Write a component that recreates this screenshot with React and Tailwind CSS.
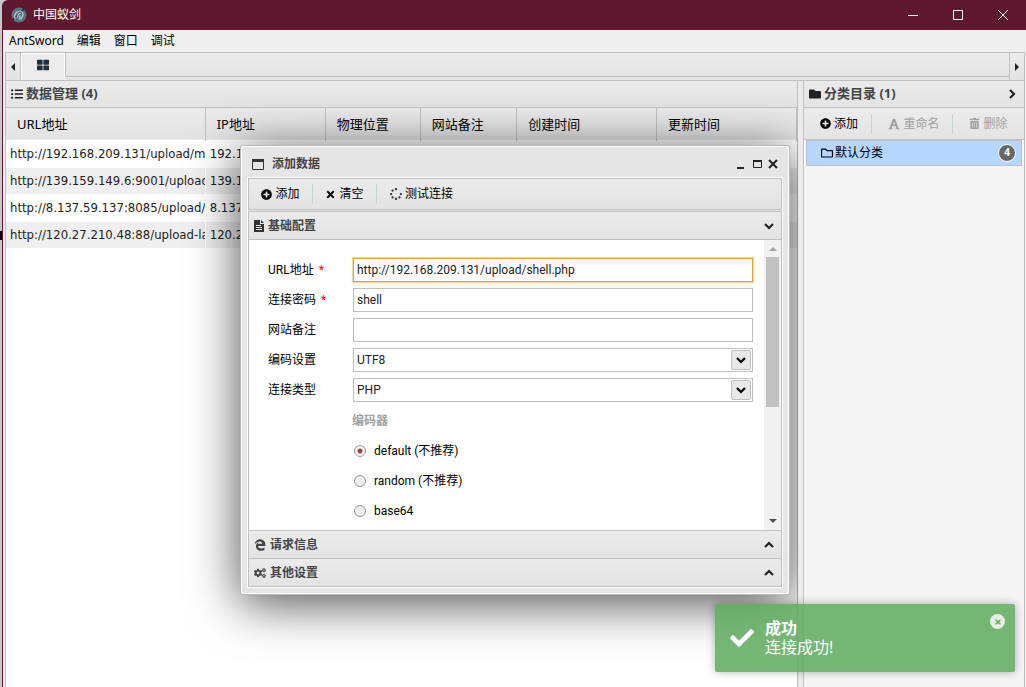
import React from "react";
import { FaPlusCircle, FaTimes, FaSpinner, FaListUl, FaFolder, FaFont, FaTrashAlt, FaRegFolder, FaEdgeLegacy, FaCogs, FaCheck, FaThLarge } from "react-icons/fa";

const barBg = "bg-linear-to-b from-[#ebebeb] to-[#e3e3e3]";
const sites = [
  ["http://192.168.209.131/upload/myshell.php", "192.168.209.131"],
  ["http://139.159.149.6:9001/upload/shell.php", "139.159.149.6"],
  ["http://8.137.59.137:8085/upload/shell.php", "8.137.59.137"],
  ["http://120.27.210.48:88/upload-labs/shell.php", "120.27.210.48"],
];
const columns = ["URL地址", "IP地址", "物理位置", "网站备注", "创建时间", "更新时间"];

function Logo() {
  return (
    <svg className="size-4" viewBox="0 0 16 16" aria-hidden="true">
      <circle cx="8" cy="8" r="7.5" fill="#587480" />
      <path d="M1.500 13 13.500 1.500" stroke="#22343c" strokeWidth="1.600" />
      <path d="M4.500 12C2.500 9 4 5.500 7.500 4.500M8.500 4c3.500 0 4.500 3.500 2.500 6.500-.8 1-2 1.700-3.200 1.800M6.200 10.500l1-3 2.300-1.800M9.300 8.500l-.6 2.300" stroke="#c2d5dc" strokeWidth="1.200" fill="none" />
    </svg>
  );
}

function Chevron({ d }) {
  return (
    <svg className="size-2.5" viewBox="0 0 10 10" aria-hidden="true">
      <path d={d} fill="none" stroke="currentColor" strokeWidth="2.200" />
    </svg>
  );
}
const DOWN = "M1 3l4 4 4-4";
const UP = "M1 7l4-4 4 4";
const RIGHT = "M3 1l4 4-4 4";

function FileText() {
  return (
    <svg className="h-3 w-2.5" viewBox="0 0 10 12" aria-hidden="true">
      <path fill="#333" fillRule="evenodd" d="M0 .5Q0 0 .5 0H6v4h4v7.500q0 .5-.5.500h-9Q0 12 0 11.500zM7 0l3 3H7zM2 5h5v1H2zM2 7h6v1H2zM2 9h6v1H2z" />
    </svg>
  );
}

function TitleBar() {
  return (
    <header className="flex h-[30px] items-center rounded-tl-md bg-[#5f182f] pl-[9px] text-white">
      <Logo />
      <h1 className="ml-1.5 flex-1 text-xs">中国蚁剑</h1>
      <button aria-label="最小化" className="flex h-full w-[46px] items-center justify-center"><svg className="size-3" viewBox="0 0 12 12"><path d="M1 6.500h10" stroke="#fff" /></svg></button>
      <button aria-label="最大化" className="flex h-full w-11 items-center justify-center"><svg className="size-3" viewBox="0 0 12 12"><path d="M1.500 1.500h9v9h-9z" fill="none" stroke="#fff" /></svg></button>
      <button aria-label="关闭" className="flex h-full w-[46px] items-center justify-center"><svg className="size-3" viewBox="0 0 12 12"><path d="m1 1 10 10M11 1 1 11" stroke="#fff" /></svg></button>
    </header>
  );
}

function TabBar() {
  return (
    <div className={`flex h-[29px] border border-[#c0c0c0] ${barBg}`}>
      <button aria-label="向左" className="flex w-[15px] items-center justify-center border-r border-[#c0c0c0]"><svg className="h-2 w-1" viewBox="0 0 4 8"><path d="M4 0v8L0 4z" fill="#222" /></svg></button>
      <button aria-label="主页" className="flex w-11 items-center justify-center border border-b-0 border-white bg-[#ebebeb] pb-1"><FaThLarge className="size-3 text-[#1d2f3d]" /></button>
      <div className="mb-[3px] flex-1 border-b border-l border-[#c0c0c0]" />
      <button aria-label="向右" className="flex w-[15px] items-center justify-center border-l border-[#c0c0c0]"><svg className="h-2 w-1" viewBox="0 0 4 8"><path d="M0 0v8l4-4z" fill="#222" /></svg></button>
    </div>
  );
}

function SiteTable() {
  return (
    <section className="flex min-w-0 flex-1 flex-col border-x border-[#c0c0c0] bg-white">
      <h2 className={`flex h-[27px] items-center gap-[3px] border-b border-[#c0c0c0] px-[5px] text-[13px] font-bold text-[#444] ${barBg}`}><FaListUl className="size-3 text-[#222]" />数据管理 (4)</h2>
      <table className="w-full table-fixed border-collapse text-left">
        <colgroup><col className="w-[25.200%]" /><col className="w-[15.200%]" /><col className="w-[12%]" /><col className="w-[12.200%]" /><col className="w-[17.700%]" /><col className="w-[17.700%]" /></colgroup>
        <thead>
          <tr className={`h-8 border-b border-[#c0c0c0] ${barBg}`}>
            {columns.map((c) => <th key={c} className="border-r border-[#c0c0c0] px-[11px] text-[13px] leading-5 font-normal">{c}</th>)}
          </tr>
        </thead>
        <tbody className="font-['DejaVu_Sans_Condensed','Noto_Sans',sans-serif]">
          {sites.map(([url, ip]) => (
            <tr key={url} className="h-[27px] text-[13px] leading-5 text-[#222]">
              <td className="overflow-hidden border-y border-r border-white bg-clip-padding pl-1 whitespace-nowrap in-[tr:nth-child(even)]:bg-[#efefef]">{url}</td>
              <td className="overflow-hidden border-y border-white bg-clip-padding pl-1 whitespace-nowrap in-[tr:nth-child(even)]:bg-[#efefef]">{ip}</td>
              <td colSpan="4" className="border-y border-white bg-clip-padding in-[tr:nth-child(even)]:bg-[#efefef]" />
            </tr>
          ))}
        </tbody>
      </table>
    </section>
  );
}

function Categories() {
  return (
    <aside className="relative z-20 flex w-[222px] flex-col border-x border-[#c0c0c0] bg-[#f4f4f4]">
      <h2 className={`flex h-[27px] items-center gap-[3px] border-b border-[#c0c0c0] px-[5px] text-[13px] font-bold text-[#444] ${barBg}`}>
        <FaFolder className="size-3 text-[#222]" /><span className="flex-1">分类目录 (1)</span>
        <button aria-label="收起" className="mr-0.5 text-[#222]"><Chevron d={RIGHT} /></button>
      </h2>
      <div className={`flex h-8 items-center border-b border-[#c0c0c0] text-xs ${barBg}`}>
        <button className="flex h-5 w-[68px] items-center justify-center gap-[3px] border-r border-[#bcd6dc] pl-[3px]"><FaPlusCircle className="size-[11px]" />添加</button>
        <button disabled className="flex h-5 w-[81px] items-center justify-center gap-[3px] border-r border-[#bcd6dc] pl-1 text-[#a0a0a0]"><FaFont className="size-3" />重命名</button>
        <button disabled className="flex h-5 flex-1 items-center justify-center gap-[3px] text-[#a0a0a0]"><FaTrashAlt className="size-[11px]" />删除</button>
      </div>
      <div className="bg-[#f8f8f8] px-0.5">
        <button className="flex h-[26px] w-full items-center border border-[#bfbfbf] bg-[#b5d6ff] pr-[5px] pl-3.5 text-xs">
          <FaRegFolder className="mr-0.5 size-3" /><span className="flex-1 text-left">默认分类</span>
          <span className="flex size-[18px] items-center justify-center rounded-full border border-white bg-[#666] text-[10px] font-bold text-white">4</span>
        </button>
      </div>
    </aside>
  );
}

function Field({ id, label, required, children }) {
  return (
    <div className="flex h-[30px] items-center">
      <label htmlFor={id} className="w-[85px] shrink-0">{label} {required && <span className="ml-0.5 text-[#f00]">*</span>}</label>
      {children}
    </div>
  );
}

const inputCls = "h-6 w-full border border-[#bfbfbf] bg-white px-[3px] text-[#222] outline-none";

function SelectField({ id, label, value }) {
  return (
    <Field id={id} label={label}>
      <div className="relative w-full">
        <select id={id} className={`${inputCls} block appearance-none`}><option>{value}</option></select>
        <span className="pointer-events-none absolute top-0.5 right-0.5 flex size-5 items-center justify-center rounded-xs border border-[#bfbfbf] bg-[#e8e8e8]"><Chevron d={DOWN} /></span>
      </div>
    </Field>
  );
}

function Section({ icon, title, open }) {
  return (
    <h3>
      <button aria-expanded={!!open} className={`flex h-7 w-full items-center gap-1 border-b border-[#c0c0c0] pr-[7px] pl-[5px] font-bold text-[#444] ${barBg}`}>
        {icon}<span className="flex-1 text-left">{title}</span>
        <span className="text-[#222]"><Chevron d={open ? DOWN : UP} /></span>
      </button>
    </h3>
  );
}

function AddDialog() {
  return (
    <div role="dialog" aria-labelledby="dlg" className="absolute top-[145px] left-[240px] z-10 w-[550px] rounded-xs border border-[#b8b8b8] bg-[#e5e5e5] text-xs text-black shadow-[0_8px_50px_rgba(0,0,0,0.7)]">
      <div className="rounded-xs border border-white p-[5px]">
        <div className="flex h-[25px] items-center pr-0.5 pb-0.5 pl-[5px]">
          <svg className="size-3" viewBox="0 0 12 12"><path d="M.5 1.500h11v10H.5z" fill="none" stroke="#333" /><path d="M0 1h12v3H0z" fill="#333" /></svg>
          <h2 id="dlg" className="ml-2 flex-1 font-bold text-[#444]">添加数据</h2>
          <button aria-label="最小化"><svg className="h-3 w-4" viewBox="0 0 16 12"><path d="M4 9h7v2H4z" fill="#222" /></svg></button>
          <button aria-label="最大化"><svg className="h-3 w-4" viewBox="0 0 16 12"><path d="M4.500 2.500h8v7h-8z" fill="none" stroke="#222" /><path d="M4 2h9v2H4z" fill="#222" /></svg></button>
          <button aria-label="关闭"><svg className="h-3 w-4" viewBox="0 0 16 12"><path d="m4 2 8 8M12 2l-8 8" stroke="#222" strokeWidth="2" /></svg></button>
        </div>
        <div className="border border-white">
          <div className={`flex h-8 items-center border border-[#c0c0c0] ${barBg}`}>
            <button className="flex h-5 w-16 items-center justify-center gap-[3px] border-r border-[#bcd6dc]"><FaPlusCircle className="size-[11px]" />添加</button>
            <button className="flex h-5 w-16 items-center justify-center gap-[3px] border-r border-[#bcd6dc]"><FaTimes className="size-[11px]" />清空</button>
            <button className="flex h-5 items-center gap-[3px] pl-[13px]"><FaSpinner className="size-3 text-[#333]" />测试连接</button>
          </div>
          <div className="mt-[1px] border border-b-0 border-[#c0c0c0]">
            <Section open title="基础配置" icon={<FileText />} />
            <div className="flex h-[291px] border-b border-[#c0c0c0] bg-white">
              <form className="flex-1 overflow-hidden pt-[15px] pr-[11px] pl-[19px] font-['Roboto','Noto_Sans_CJK_SC',sans-serif]">
                <Field id="url" label="URL地址" required><input id="url" defaultValue="http://192.168.209.131/upload/shell.php" className="h-6 w-full border border-[#dda23b] bg-white px-[3px] text-[#222] shadow-[0_0_1px_1px_#f3d9a5] outline-none" /></Field>
                <Field id="pwd" label="连接密码" required><input id="pwd" defaultValue="shell" className={inputCls} /></Field>
                <Field id="note" label="网站备注"><input id="note" className={inputCls} /></Field>
                <SelectField id="enc" label="编码设置" value="UTF8" />
                <SelectField id="type" label="连接类型" value="PHP" />
                <fieldset className="pt-[1px] pl-[84px]">
                  <legend className="flex h-[30px] items-center pt-0.5 font-bold text-[#a0a0a0]">编码器</legend>
                  {["default (不推荐)", "random (不推荐)", "base64"].map((t, i) => (
                    <label key={t} className="flex h-[30px] items-center gap-2">
                      <input type="radio" name="encoder" defaultChecked={i === 0} className="ml-0.5 size-3 appearance-none rounded-full border border-[#999] bg-[#eee] checked:bg-[radial-gradient(#954a4a_2px,#f4f4f4_3px)]" />{t}
                    </label>
                  ))}
                </fieldset>
              </form>
              <div className="flex w-[17px] flex-col items-center bg-[#f1f1f1]">
                <svg className="h-[17px] w-2" viewBox="0 0 8 17"><path d="M0 11h8L4 7z" fill="#a3a3a3" /></svg>
                <div className="h-[150px] w-[13px] bg-[#c1c1c1]" />
                <svg className="mt-auto h-[17px] w-2" viewBox="0 0 8 17"><path d="M0 6h8L4 10z" fill="#505050" /></svg>
              </div>
            </div>
            <Section title="请求信息" icon={<FaEdgeLegacy className="size-3" />} />
            <Section title="其他设置" icon={<FaCogs className="size-3" />} />
          </div>
        </div>
      </div>
    </div>
  );
}

function Toast() {
  return (
    <div role="status" className="absolute right-[11px] bottom-[15px] z-30 flex h-[68px] w-[300px] items-center rounded-xs bg-[#5eaa5e]/85 pl-[15px] text-white shadow-[0_0_8px_rgba(0,0,0,0.3)]">
      <FaCheck className="size-6" />
      <div className="ml-[11px] text-base leading-[19px]"><strong className="block">成功</strong><p>连接成功!</p></div>
      <button aria-label="关闭" className="absolute top-2.5 right-2.5 flex size-[15px] items-center justify-center rounded-full bg-white/80"><FaTimes className="size-2 text-[#5eaa5e]" /></button>
    </div>
  );
}

export default function App() {
  return (
    <div className="relative flex min-h-screen flex-col overflow-hidden bg-[#c8c8c8] pl-0.5 font-['Noto_Sans','Noto_Sans_CJK_SC',sans-serif] text-black">
      <div className="absolute top-[231px] left-0 h-[9px] w-0.5 bg-black" />
      <TitleBar />
      <div className="flex flex-1 flex-col border-l border-[#5f182f] bg-[#efefef] pr-[1px] pl-0.5">
        <nav className="flex h-[22px] items-center gap-[13px] pl-1 text-xs"><a href="#app">AntSword</a><a href="#edit">编辑</a><a href="#window">窗口</a><a href="#debug">调试</a></nav>
        <TabBar />
        <main className="flex flex-1"><SiteTable /><div className="relative z-20 w-[5px] bg-[#ebebeb]" /><Categories /></main>
      </div>
      <AddDialog />
      <Toast />
    </div>
  );
}
